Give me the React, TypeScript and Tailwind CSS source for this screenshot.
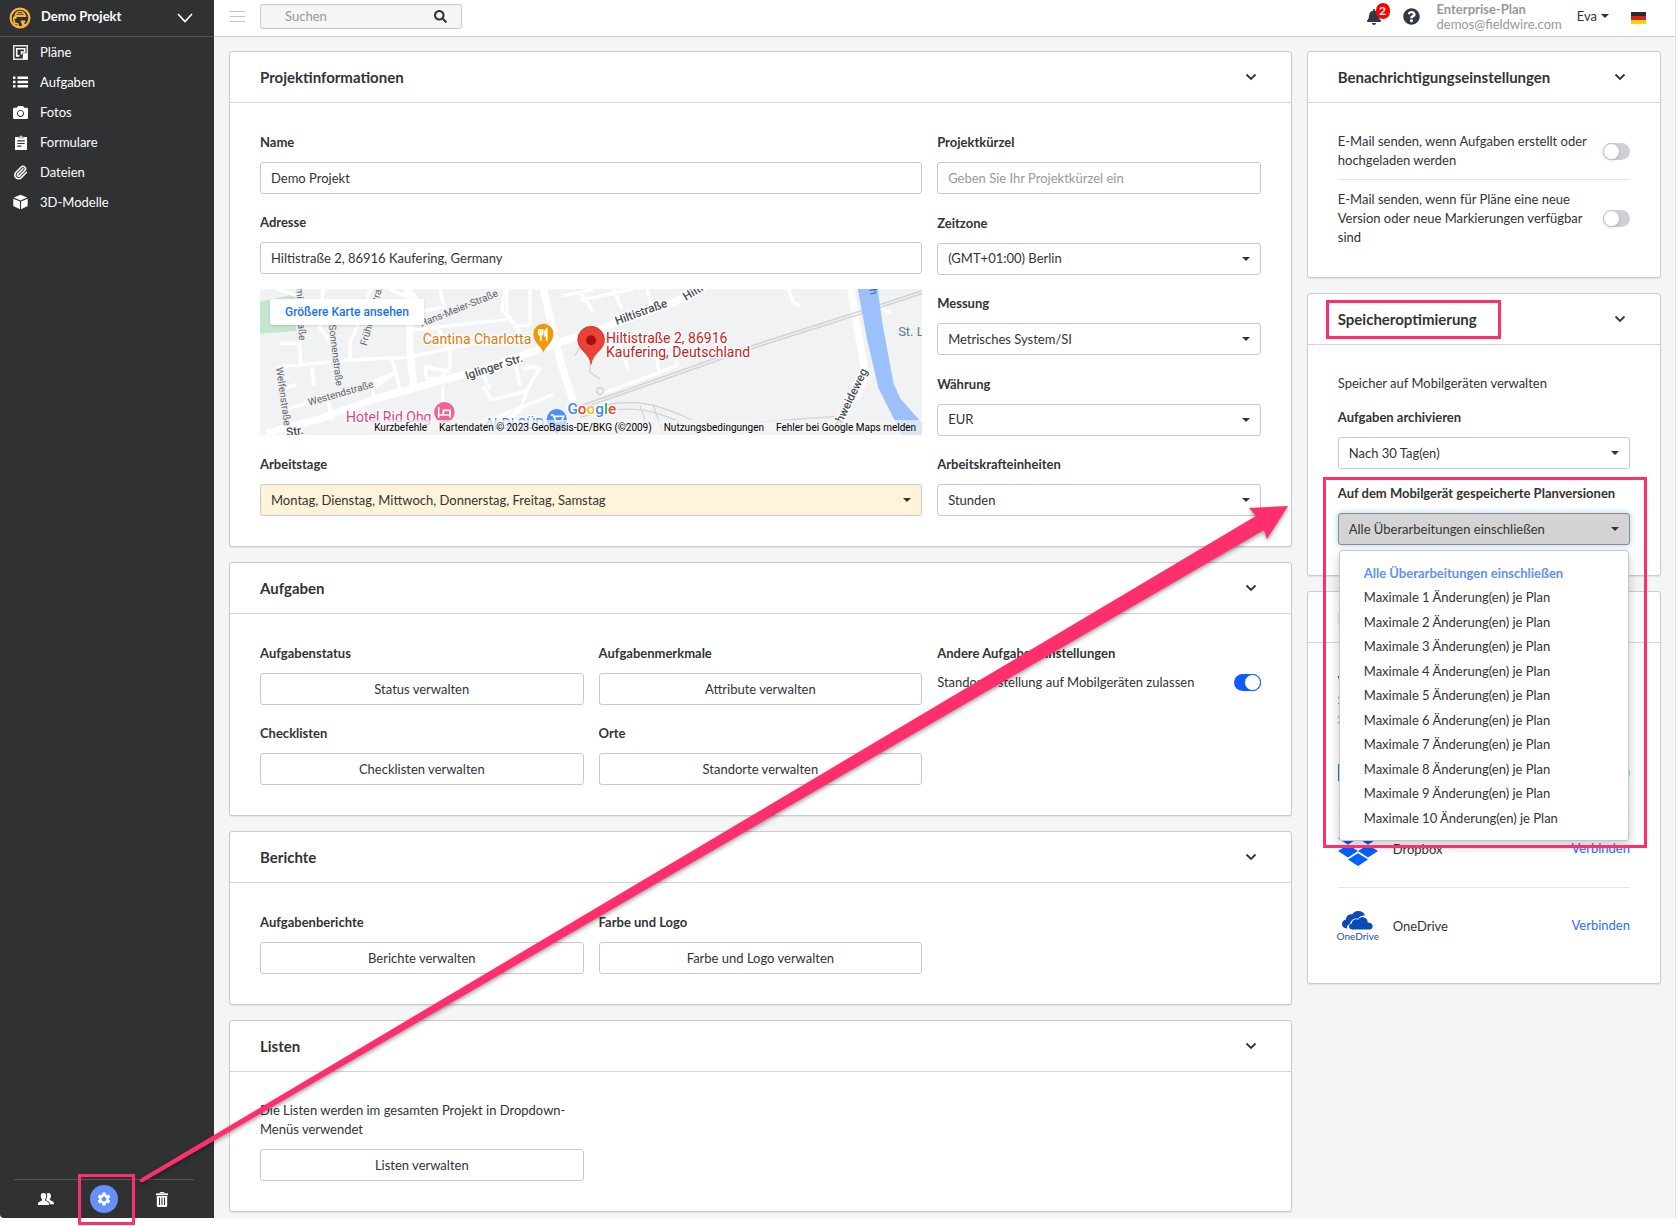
import { useState } from "react";
import type { ReactNode } from "react";
import { Paperclip } from "lucide-react";
import { FaBell, FaCamera, FaQuestionCircle, FaSearch } from "react-icons/fa";
import { MdSettings } from "react-icons/md";

const versions = [
  "Alle Überarbeitungen einschließen",
  "Maximale 1 Änderung(en) je Plan",
  "Maximale 2 Änderung(en) je Plan",
  "Maximale 3 Änderung(en) je Plan",
  "Maximale 4 Änderung(en) je Plan",
  "Maximale 5 Änderung(en) je Plan",
  "Maximale 6 Änderung(en) je Plan",
  "Maximale 7 Änderung(en) je Plan",
  "Maximale 8 Änderung(en) je Plan",
  "Maximale 9 Änderung(en) je Plan",
  "Maximale 10 Änderung(en) je Plan",
];

function PlanIcon() {
  return (
    <svg viewBox="0 0 15 15" className="size-[15px]" fill="none">
      <path d="M.75.75h13.5v13.5H.75z" stroke="#e4e4e5" strokeWidth="1.5" />
      <path d="M3.700 11V3.800h8V7H8.500v2.500" stroke="#fff" strokeWidth="1.600" />
      <path d="M3 10h3.500v1.800H3zM9.800 8.200H14V14H9.800z" fill="#fff" />
    </svg>
  );
}

function ListIcon() {
  return (
    <svg viewBox="0 0 15 12" className="w-[15px]" fill="#fff">
      <path d="M0 .5h2.500v2.500H0zM0 4.750h2.500v2.500H0zM0 9h2.500v2.500H0zM4.500.5H15v2.500H4.500zM4.500 4.750H15v2.500H4.500zM4.500 9H15v2.500H4.500z" />
    </svg>
  );
}

function FormIcon() {
  return (
    <svg viewBox="0 0 12 15" className="h-[15px] w-3">
      <path d="M0 2h12v13H0z" fill="#fff" />
      <path d="M3 3.500V2l1.500-.4Q6-.8 7.500 1.600L9 2v1.500z" fill="#bdbdbe" />
      <path d="M2.300 5.800h7.400M2.300 8.500h7.400M2.300 11.200h4.200" stroke="#303133" strokeWidth="1.200" />
    </svg>
  );
}

function CubeIcon() {
  return (
    <svg viewBox="0 0 16 16" className="size-4" fill="#fff">
      <path d="M8 .3 15.200 3.200 8 6.300.8 3.200zM.3 4.400l7.100 3v8.300L.3 12.300zM15.700 4.400l-7.100 3v8.300l7.100-3.400z" />
    </svg>
  );
}

function PeopleIcon() {
  return (
    <svg viewBox="0 0 16 12" className="w-4" fill="#fff">
      <path d="M5.500 0C7.300 0 8.300 1.300 8.200 3c0 1.500-.6 2.600-1.200 3.300v1.200l3 1.500c.8.500 1 1 1 3H0c0-2 .2-2.500 1-3l3-1.500V6.300C3.400 5.600 2.800 4.500 2.800 3 2.700 1.300 3.700 0 5.500 0z" />
      <path d="M8.700.7C9.200.3 9.800.1 10.400.1c1.700 0 2.600 1.200 2.500 2.800 0 1.400-.5 2.400-1.100 3v1.200l3 1.500c.9.500 1.200 1.400 1.200 2.600h-4.200c0-1.500-.5-2.300-1.500-2.900L8 7.200v-.5C9.200 5 9.700 2.500 8.700.7z" />
    </svg>
  );
}

function TrashIcon() {
  return (
    <svg viewBox="0 0 12 15" className="h-[15px] w-3" fill="none">
      <path d="M4 1.500V.6h4v.9" stroke="#fff" />
      <path d="M0 1.400h12v1.800H0z" fill="#fff" />
      <path
        fillRule="evenodd"
        d="M.8 4h10.400v9.500q0 1.500-1.500 1.500H2.300Q.8 15 .8 13.500zM3 5.500V13h1V5.500zM5.500 5.500V13h1V5.500zM8 5.500V13h1V5.500z"
        fill="#fff"
      />
    </svg>
  );
}

function ProjectLogo() {
  return (
    <svg viewBox="0 0 22 22" className="size-[22px]">
      <circle cx="11" cy="11" r="9.400" fill="none" stroke="#f8b43a" strokeWidth="2.200" />
      <path
        d="M5.500 8.500C5.800 5.500 8 3.800 11 3.800s5.300 1.700 5.600 4.500l.8.400v1.200H7.500v2H5.800l-.6 1 .9.500.2 2.300 3 .2 1.200 5L8 20l.2-2.600-3.500-.4-1-6z"
        fill="#f8b43a"
      />
      <path d="M11.500 13.500h5.300l-1.500 3 2.500 2-3.800 2.500-1.200-3.500z" fill="#f8b43a" />
      <path d="M7.500 7.300h7.300M9 5.500h4" stroke="#303133" strokeWidth=".9" />
    </svg>
  );
}

function GermanFlag() {
  return (
    <svg viewBox="0 0 15 12" className="w-[15px]">
      <path d="M0 0h15v4H0z" fill="#2b2b2b" />
      <path d="M0 4h15v4H0z" fill="#dc1f1f" />
      <path d="M0 8h15v4H0z" fill="#f5d313" />
    </svg>
  );
}

function Caret() {
  return (
    <svg viewBox="0 0 8 4" className="h-1 w-2 shrink-0" fill="#333">
      <path d="M0 0h8L4 4z" />
    </svg>
  );
}

function Label({ htmlFor, children }: { htmlFor?: string; children: ReactNode }) {
  return (
    <label htmlFor={htmlFor} className="mb-2.5 block h-5 font-bold leading-5">
      {children}
    </label>
  );
}

function TextField({
  id,
  label,
  value,
  placeholder,
}: {
  id: string;
  label: string;
  value?: string;
  placeholder?: string;
}) {
  return (
    <div>
      <Label htmlFor={id}>{label}</Label>
      <input
        id={id}
        type="text"
        defaultValue={value}
        placeholder={placeholder}
        className="block h-8 w-full rounded-[3px] border border-[#c8c9cc] bg-white px-2.5 placeholder:text-[#999]"
      />
    </div>
  );
}

function SelectField({
  id,
  label,
  value,
  tone = "border-[#c8c9cc] bg-white",
  children,
}: {
  id: string;
  label: string;
  value: string;
  tone?: string;
  children?: ReactNode;
}) {
  return (
    <div className="relative">
      <Label htmlFor={id}>{label}</Label>
      <div className="grid items-center">
        <select
          id={id}
          className={`col-start-1 row-start-1 h-8 w-full appearance-none rounded-[3px] border pl-2.5 pr-7 ${tone}`}
        >
          <option>{value}</option>
        </select>
        <span className="pointer-events-none col-start-1 row-start-1 mr-[11px] justify-self-end">
          <Caret />
        </span>
      </div>
      {children}
    </div>
  );
}

function ButtonField({ label, text }: { label: string; text: string }) {
  return (
    <div>
      <h3 className="mb-2.5 h-5 font-bold leading-5">{label}</h3>
      <ManageButton text={text} />
    </div>
  );
}

function ManageButton({ text }: { text: string }) {
  return (
    <button type="button" className="block h-8 w-full rounded-[3px] border border-[#c8c9cc] bg-white">
      {text}
    </button>
  );
}

function Toggle({ id, on = false }: { id: string; on?: boolean }) {
  const [checked, setChecked] = useState(on);
  return (
    <input
      id={id}
      type="checkbox"
      role="switch"
      checked={checked}
      onChange={() => setChecked(!checked)}
      className="h-[17px] w-[27px] shrink-0 appearance-none rounded-full bg-[#cfcfd8] before:block before:size-[17px] before:rounded-full before:border before:border-[#bfbfca] before:bg-white before:shadow-sm checked:bg-[#0f5bff] checked:before:ml-2.5 checked:before:border-[#0f5bff]"
    />
  );
}

function Card({
  title,
  marked = false,
  children,
}: {
  title: string;
  marked?: boolean;
  children: ReactNode;
}) {
  return (
    <section className="rounded-[3px] border border-[#c9cbd0] bg-white shadow-[0_1px_1px_rgba(0,0,0,0.08)]">
      <header className="flex h-[51px] items-center justify-between border-b border-[#d3d4d8] px-[30px]">
        <h2 className="relative text-[15px] font-bold">
          {title}
          {marked && (
            <span className="absolute -inset-y-2.5 -left-3 -right-6 border-3 border-[#ff2e6c]" />
          )}
        </h2>
        <button type="button" aria-label={title} className="mr-1 flex">
          <svg viewBox="0 0 12 8" className="w-3" fill="none" stroke="#333" strokeWidth="1.800">
            <path d="M1.500 1.500 6 6l4.500-4.500" />
          </svg>
        </button>
      </header>
      <div className="px-[30px] pb-[30px] pt-[29px]">{children}</div>
    </section>
  );
}

function LocationMap() {
  return (
    <div className="relative h-[146px] overflow-hidden bg-[#f1f2f4] font-[Roboto,sans-serif]">
      <svg viewBox="0 0 1986 438" preserveAspectRatio="xMidYMid slice" className="size-full">
        <path d="M0 38 110 14v112L0 134z" fill="#c3e7cd" />
        <g fill="none" stroke="#fff" strokeWidth="10" strokeLinejoin="round">
          <path d="M50 234 270 213l170-8 130-27M112 0l10 234M60 163h60M155 234l7 55M50 234l25 150M60 300l50-14M190 0l-5 40M175 110l45 60 10 110M270 213v-55l40-80 20-78M395 208l30 110M340 343v-45l60-45M75 362l270-85 70-30M200 313l16 80M450 125l120-15 170-18M540 0l18 80M740 0v73l40 55M530 110l40 73v50l-30 35h-40l-5-35 75 15M548 290v48M670 293l25 40 105-28 40-70M660 240l30 60M570 180l110-25M800 305l-20 60-110 73M640 413l240-97M735 0l-10 60 40 50h45V0M450 0l40 65 60-10M790 240l40-8M50 0l90 30M780 293l-15-70M960 8l40 60M910 20l90-18M960 34l160-34M1060 0l25 60M1160 0l14 50M1078 160l25 80M1180 170l18 78M1160 180l80-12 12 60-60 25-170 62M1585 0l15 40 20 12M1855 40l20 25 20 5M390 0l60 30" />
        </g>
        <circle cx="1020" cy="306" r="10" fill="#f1f2f4" stroke="#d4d6da" strokeWidth="5" />
        <g fill="none" stroke="#fff" strokeWidth="22" strokeLinejoin="round">
          <path d="m20 432 150-39 180-65 180-50 140-35 160-60 160-53 70-25 170-60 90-45" />
          <path d="M440 0q15 30 10 130v60l12 110M850 0l25 110 30 120 35 110" />
          <path d="m1772 0 20 120 25 140-30 70" />
        </g>
        <g fill="none" stroke="#d3d4d7" strokeWidth="5">
          <path d="m940 357 140-48 380-134 350-112 176-58M940 366l140-48 380-134 350-112 176-58" />
          <path
            d="M960 370q130-50 240-15t160 83M960 385q130-40 220-15t140 68M1140 350l30 88M1180 350l30 88M1480 400l250-18M945 200q30-60 45 0v50l30 20"
            strokeWidth="4"
          />
        </g>
        <path d="M1793 0h60l12 93 35 190 20 45 66 75v35h-60l-71-140-35-150z" fill="#9cc0f9" />
        <g fill="#5f6368" stroke="#f1f2f4" strokeWidth="8" paintOrder="stroke" fontSize="30">
          <text transform="translate(485 114) rotate(-22)">Hans-Meier-Straße</text>
          <text transform="translate(148 350) rotate(-16)">Westendstraße</text>
          <text transform="translate(48 236) rotate(82)">Welfenstraße</text>
          <text transform="translate(206 108) rotate(83)">Sonnenstraße</text>
          <text transform="translate(320 172) rotate(-75)">Frühlingsstraße</text>
          <text transform="translate(106 -54) rotate(87)">Schmiledstraße</text>
        </g>
        <g fill="#4a4e54" stroke="#fff" strokeWidth="8" paintOrder="stroke" fontSize="35" fontWeight="500">
          <text transform="translate(620 272) rotate(-18)">Iglinger Str.</text>
          <text transform="translate(1070 108) rotate(-20)">Hiltistraße</text>
          <text transform="translate(1278 36) rotate(-32)">Hiltistraße</text>
          <text transform="translate(80 442) rotate(-8)">Str.</text>
          <text transform="translate(1738 420) rotate(-64)">chweideweg</text>
        </g>
        <text transform="translate(1816 -52) rotate(78)" fontSize="34" fill="#3765b5">
          Lech
        </text>
        <text x="1914" y="142" fontSize="39" fill="#5d7f8c">
          St. Leonhard
        </text>
        <g stroke="#fff" strokeWidth="8" paintOrder="stroke" fontSize="42">
          <text x="488" y="166" fill="#dd7b0a">
            Cantina Charlotta
          </text>
          <text x="258" y="400" fill="#e04382">
            Hotel Rid Ohg
          </text>
          <text x="674" y="420" fill="#4285f4">
            ALDI SÜD
          </text>
          <text x="1038" y="162" fill="#c5221f">
            Hiltistraße 2, 86916
          </text>
          <text x="1038" y="204" fill="#c5221f">
            Kaufering, Deutschland
          </text>
        </g>
        <path d="M850 192c-4-20-30-30-30-58a30 30 0 1 1 60 0c0 28-26 38-30 58z" fill="#f29900" />
        <path d="M836 120v12q0 6 6 6t6-6v-12m-6 0v36M860 156v-36q-7 6-6 20h6" stroke="#fff" strokeWidth="5" fill="none" />
        <circle cx="553" cy="370" r="31" fill="#f06292" />
        <path d="M536 354v32m0-8h34v8m0-8v-14h-20v14" stroke="#fff" strokeWidth="5" fill="none" />
        <path d="M890 438c-4-20-30-22-30-48a30 30 0 1 1 60 0c0 26-26 28-30 48z" fill="#4f8df7" />
        <path d="M872 378h7l8 18h18l6-14h-28" stroke="#fff" strokeWidth="5" fill="none" />
        <path
          d="M993 226c-4-34-40-42-40-74a40 40 0 1 1 80 0c0 32-36 40-40 74z"
          fill="#ea4335"
          stroke="#c5221f"
          strokeWidth="2"
        />
        <circle cx="993" cy="154" r="15" fill="#a50e0e" />
        <text x="922" y="374" fontSize="46" fontWeight="500" stroke="#fff" strokeWidth="8" paintOrder="stroke">
          <tspan fill="#4285f4">G</tspan>
          <tspan fill="#ea4335">o</tspan>
          <tspan fill="#fbbc04">o</tspan>
          <tspan fill="#4285f4">g</tspan>
          <tspan fill="#34a853">l</tspan>
          <tspan fill="#ea4335">e</tspan>
        </text>
      </svg>
      <a
        href="#karte"
        className="absolute left-2.5 top-2.5 flex h-[26px] items-center rounded-[2px] bg-white px-[15px] text-xs font-medium text-[#1a73e8] shadow"
      >
        Größere Karte ansehen
      </a>
      <div className="absolute bottom-0 right-0 flex h-[15px] items-center gap-3 bg-[#f5f5f5]/70 px-1.5 text-[10px] text-black">
        <button type="button">Kurzbefehle</button>
        <span>Kartendaten © 2023 GeoBasis-DE/BKG (©2009)</span>
        <a href="#nutzung">Nutzungsbedingungen</a>
        <a href="#fehler">Fehler bei Google Maps melden</a>
      </div>
    </div>
  );
}

function Sidebar() {
  const items = [
    { name: "Pläne", icon: <PlanIcon /> },
    { name: "Aufgaben", icon: <ListIcon /> },
    { name: "Fotos", icon: <FaCamera className="size-[15px]" /> },
    { name: "Formulare", icon: <FormIcon /> },
    { name: "Dateien", icon: <Paperclip className="size-[15px]" strokeWidth={2.5} /> },
    { name: "3D-Modelle", icon: <CubeIcon /> },
  ];
  return (
    <aside className="flex w-[214px] shrink-0 flex-col rounded-bl bg-[#303133] text-white">
      <div className="flex h-[37px] items-center border-b border-[#555658] pl-[9px] pr-[21px]">
        <ProjectLogo />
        <span className="ml-2.5 flex-1 pb-1 font-bold">Demo Projekt</span>
        <button type="button" aria-label="Projekt wechseln">
          <svg viewBox="0 0 16 10" className="w-4" fill="none" stroke="#fff" strokeWidth="1.600">
            <path d="m1 1 7 7.500L15 1" />
          </svg>
        </button>
      </div>
      <nav className="flex flex-1 flex-col">
        {items.map((item) => (
          <a key={item.name} href="#" className="flex h-[30px] items-center gap-3 pl-[13px]">
            <span className="flex w-[15px] justify-center">{item.icon}</span>
            {item.name}
          </a>
        ))}
      </nav>
      <div className="ml-3.5 mr-5 grid h-[39px] grid-cols-3 items-center justify-items-center border-t border-[#555658] px-[3px]">
        <button type="button" aria-label="Personen">
          <PeopleIcon />
        </button>
        <button
          type="button"
          aria-label="Einstellungen"
          className="relative flex size-7 items-center justify-center rounded-full bg-[#6490f8]"
        >
          <MdSettings className="size-4" />
          <span className="absolute -bottom-3 -left-3 -right-[17px] -top-[11px] border-3 border-[#ff2e6c]" />
        </button>
        <button type="button" aria-label="Papierkorb">
          <TrashIcon />
        </button>
      </div>
    </aside>
  );
}

function TopBar() {
  return (
    <header className="flex h-[37px] items-center border-b border-[#cbccd0] bg-white pl-4 pr-[29px]">
      <button type="button" aria-label="Menü" className="mb-1 flex w-[15px] flex-col gap-1">
        <span className="h-px bg-[#c4c4c4]" />
        <span className="h-px bg-[#c4c4c4]" />
        <span className="h-px bg-[#c4c4c4]" />
      </button>
      <div className="mb-1 ml-[15px] flex h-[25px] w-[202px] items-center rounded-[3px] border border-[#c8c9cc] bg-[#f4f5f7] pl-6 pr-3.5">
        <input
          type="text"
          aria-label="Suchen"
          placeholder="Suchen"
          className="min-w-0 flex-1 placeholder:text-[#999]"
        />
        <FaSearch className="size-[13px] text-[#333]" />
      </div>
      <div className="ml-auto flex items-center">
        <button type="button" aria-label="Mitteilungen" className="relative mb-0.5 text-[#333845]">
          <FaBell className="size-4" />
          <span className="absolute -right-2 -top-1.5 flex h-4 w-3.5 items-center justify-center rounded-full bg-[#f00] text-xs font-bold text-white">
            2
          </span>
        </button>
        <button type="button" aria-label="Hilfe" className="mb-1 ml-[21px] text-[#333845]">
          <FaQuestionCircle className="size-[17px]" />
        </button>
        <p className="mb-0.5 ml-[17px] leading-[15px] text-[#999]">
          <strong>Enterprise-Plan</strong>
          <br />
          demos@fieldwire.com
        </p>
        <button type="button" className="mb-1 ml-[15px] flex items-center gap-1">
          Eva <Caret />
        </button>
        <button type="button" aria-label="Sprache" className="ml-[22px]">
          <GermanFlag />
        </button>
      </div>
    </header>
  );
}

function StorageRow({ logo, name }: { logo: ReactNode; name: string }) {
  return (
    <li className="flex h-[77px] items-center border-b border-[#e6e6e8] last:border-b-0">
      <span className="flex w-10 justify-center">{logo}</span>
      <span className="ml-[15px] flex-1">{name}</span>
      <a href="#verbinden" className="mb-0.5 text-[#2f6bff]">
        Verbinden
      </a>
    </li>
  );
}

function DropboxLogo() {
  return (
    <svg viewBox="0 0 40 34" className="w-10" fill="#0061ff">
      <path d="m10 0 10 6.300-10 6.400L0 6.300zM30 0l10 6.300-10 6.400-10-6.400zM10 12.800l10 6.300-10 6.400L0 19.100zM30 12.800l10 6.300-10 6.400-10-6.400zM20 21.200l10 6.400L20 34l-10-6.400z" />
    </svg>
  );
}

function OneDriveLogo() {
  return (
    <span className="flex flex-col items-center text-[10px] leading-3 text-[#1d4fb5]">
      <svg viewBox="0 0 31 19" className="w-[31px]" fill="#0a4bb8">
        <path d="M5 17.500C1.500 17.500 0 15 0 12.800 0 10.500 1.800 8.600 4 8.400 4 5 7 2.600 10.200 3.300 11.500 1.200 13.800 0 16.200 0c3.500 0 6 2 7 4.700-3-.4-5.600.8-7 3-4-.8-7.500 1.300-8 5-2 .8-3.500 2.500-3.200 4.800z" />
        <path d="M10.500 18.600c-2.500 0-3.600-1.500-3.600-3 0-1.700 1.200-3 3-3.200-.2-3 3.200-5 6.200-3.600 1.200-2 3.300-3 5.300-2.600 2.800.4 4.500 2.700 4.300 5.300 3 0 5 1.600 5 3.700 0 2-1.600 3.400-3.700 3.400z" />
      </svg>
      OneDrive
    </span>
  );
}

function VersionMenu() {
  return (
    <ul
      role="listbox"
      className="absolute inset-x-px top-[67px] z-10 flex h-[291px] flex-col justify-between rounded-[3px] border border-[#c4c5c8] bg-white py-2.5 shadow-[0_5px_12px_rgba(0,0,0,0.2)]"
    >
      {versions.map((v, i) => (
        <li
          key={v}
          role="option"
          aria-selected={i === 0}
          className="flex h-6 items-center pl-6 aria-selected:font-bold aria-selected:text-[#6490f8]"
        >
          {v}
        </li>
      ))}
    </ul>
  );
}

// pointer from the gear in the sidebar to the storage card
function Arrow() {
  return (
    <svg
      viewBox="0 0 1160 690"
      className="pointer-events-none absolute left-[135px] top-[500px] z-20 w-[1160px] drop-shadow-[0_2px_2px_rgba(0,0,0,0.4)]"
      fill="#ff2e6c"
    >
      <path d="M5 679 1121 16l-7-8 39-2-21 33-3-9L8 682q-4 1-3-3z" />
    </svg>
  );
}

export default function App() {
  return (
    <div className="relative min-h-screen bg-white pb-2 pr-[3px] font-[Lato,sans-serif] text-[13px] leading-[19px] text-[#333]">
      <div className="flex">
        <Sidebar />
        <div className="min-w-0 flex-1 border-r border-[#e3e4e7] bg-[#f4f5f7]">
          <TopBar />
          <main className="grid grid-cols-[minmax(0,3fr)_minmax(0,1fr)] items-start gap-[15px] pb-1.5 pl-[15px] pr-3.5 pt-3.5">
            <div className="flex flex-col gap-[15px]">
              <Card title="Projektinformationen">
                <div className="grid grid-cols-3 gap-[15px]">
                  <div className="col-span-2 flex flex-col">
                    <TextField id="name" label="Name" value="Demo Projekt" />
                    <div className="mt-[18px]">
                      <TextField id="address" label="Adresse" value="Hiltistraße 2, 86916 Kaufering, Germany" />
                    </div>
                    <div className="mb-[19px] mt-[15px]">
                      <LocationMap />
                    </div>
                    <SelectField
                      id="days"
                      label="Arbeitstage"
                      value="Montag, Dienstag, Mittwoch, Donnerstag, Freitag, Samstag"
                      tone="border-[#c8c9cc] bg-[#fff3d9]"
                    />
                  </div>
                  <div className="flex flex-col justify-between">
                    <TextField id="code" label="Projektkürzel" placeholder="Geben Sie Ihr Projektkürzel ein" />
                    <SelectField id="zone" label="Zeitzone" value="(GMT+01:00) Berlin" />
                    <SelectField id="units" label="Messung" value="Metrisches System/SI" />
                    <SelectField id="currency" label="Währung" value="EUR" />
                    <SelectField id="labor" label="Arbeitskrafteinheiten" value="Stunden" />
                  </div>
                </div>
              </Card>

              <Card title="Aufgaben">
                <div className="grid grid-cols-3 gap-x-[15px] gap-y-[18px]">
                  <ButtonField label="Aufgabenstatus" text="Status verwalten" />
                  <ButtonField label="Aufgabenmerkmale" text="Attribute verwalten" />
                  <div>
                    <h3 className="mb-2.5 h-5 font-bold leading-5">Andere Aufgabeneinstellungen</h3>
                    <div className="flex items-center justify-between">
                      <label htmlFor="locations">Standorterstellung auf Mobilgeräten zulassen</label>
                      <Toggle id="locations" on />
                    </div>
                  </div>
                  <ButtonField label="Checklisten" text="Checklisten verwalten" />
                  <ButtonField label="Orte" text="Standorte verwalten" />
                </div>
              </Card>

              <Card title="Berichte">
                <div className="grid grid-cols-3 gap-[15px]">
                  <ButtonField label="Aufgabenberichte" text="Berichte verwalten" />
                  <ButtonField label="Farbe und Logo" text="Farbe und Logo verwalten" />
                </div>
              </Card>

              <Card title="Listen">
                <div className="grid grid-cols-3 gap-[15px]">
                  <div>
                    <p className="mb-2.5">Die Listen werden im gesamten Projekt in Dropdown-Menüs verwendet</p>
                    <ManageButton text="Listen verwalten" />
                  </div>
                </div>
              </Card>
            </div>

            <div className="flex flex-col gap-[15px]">
              <Card title="Benachrichtigungseinstellungen">
                <div className="flex items-center justify-between gap-3 border-b border-[#e6e6e8] pb-[9px]">
                  <label htmlFor="mail-tasks">E-Mail senden, wenn Aufgaben erstellt oder hochgeladen werden</label>
                  <Toggle id="mail-tasks" />
                </div>
                <div className="flex items-center justify-between gap-3 pt-2.5">
                  <label htmlFor="mail-plans">
                    E-Mail senden, wenn für Pläne eine neue Version oder neue Markierungen verfügbar sind
                  </label>
                  <Toggle id="mail-plans" />
                </div>
              </Card>

              <Card title="Speicheroptimierung" marked>
                <p className="mb-3.5">Speicher auf Mobilgeräten verwalten</p>
                <SelectField id="archive" label="Aufgaben archivieren" value="Nach 30 Tag(en)" />
                <div className="relative mt-3.5">
                  <SelectField
                    id="versions"
                    label="Auf dem Mobilgerät gespeicherte Planversionen"
                    value="Alle Überarbeitungen einschließen"
                    tone="border-[#8c8c8c] bg-[#d4d4d4] shadow-[0_0_6px_rgba(102,175,233,0.6)]"
                  >
                    <VersionMenu />
                  </SelectField>
                  <span className="pointer-events-none absolute -left-[15px] -right-[17px] -top-1.5 z-20 h-[371px] border-3 border-[#ff2e6c]" />
                </div>
              </Card>

              <Card title="Integrationen">
                <p>Verbinden Sie dieses Projekt mit einem Cloud-Speicherdienst, um Dateien und Pläne zu Synchronisieren</p>
                <ul className="-mb-3 mt-[5px]">
                  <StorageRow logo={<span className="h-[17px] w-10 bg-[#0089c7]" />} name="Box" />
                  <StorageRow logo={<DropboxLogo />} name="Dropbox" />
                  <StorageRow logo={<OneDriveLogo />} name="OneDrive" />
                </ul>
              </Card>
            </div>
          </main>
        </div>
      </div>
      <Arrow />
    </div>
  );
}
